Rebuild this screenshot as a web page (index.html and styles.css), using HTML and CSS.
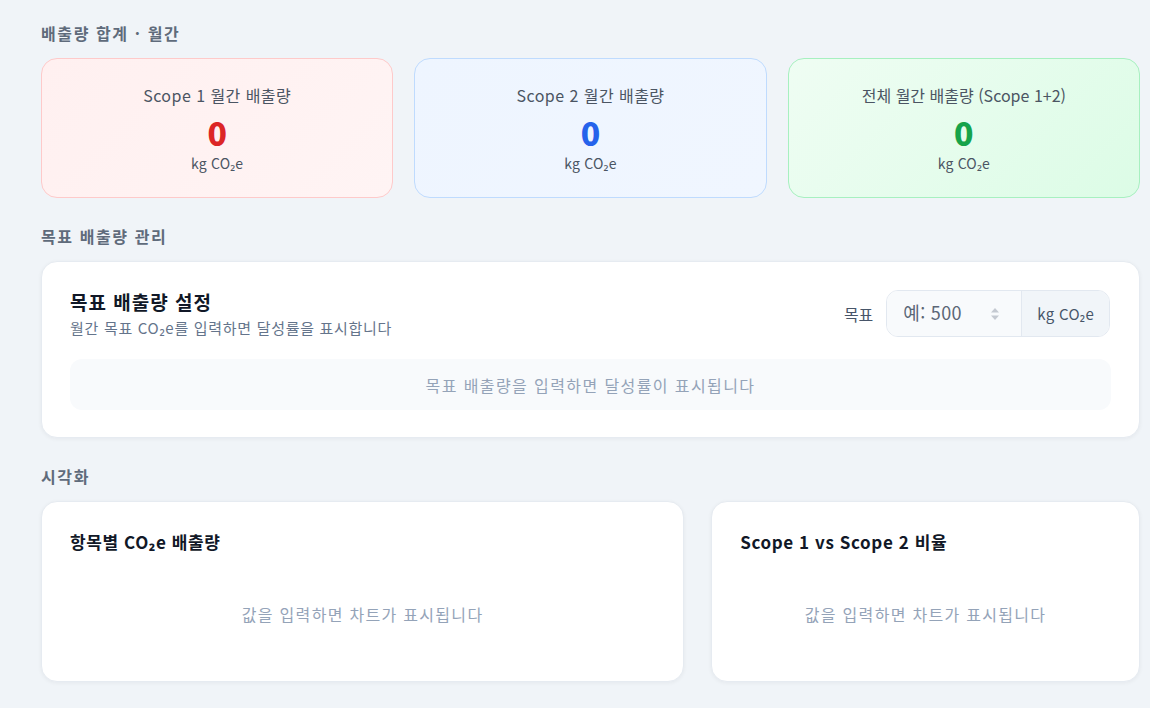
FILE: index.html
```html
<!DOCTYPE html>
<html lang="ko">
  <head>
    <meta charset="UTF-8" />
    <meta name="viewport" content="width=device-width, initial-scale=1.0" />
    <title>배출량 대시보드</title>
    <link rel="stylesheet" href="styles.css">
  </head>
  <body>
    <div class="page">
      <section class="section">
        <h2 class="section-title">배출량 합계 · 월간</h2>
        <div class="summary-grid">
          <div class="summary-card scope1">
            <div class="summary-label">Scope 1 월간 배출량</div>
            <div class="summary-value">0</div>
            <div class="summary-unit">kg CO₂e</div>
          </div>
          <div class="summary-card scope2">
            <div class="summary-label">Scope 2 월간 배출량</div>
            <div class="summary-value">0</div>
            <div class="summary-unit">kg CO₂e</div>
          </div>
          <div class="summary-card total">
            <div class="summary-label total-label">전체 월간 배출량 (Scope 1+2)</div>
            <div class="summary-value">0</div>
            <div class="summary-unit">kg CO₂e</div>
          </div>
        </div>
      </section>

      <section class="section">
        <h2 class="section-title">목표 배출량 관리</h2>
        <div class="panel goal-panel">
          <div class="goal-head">
            <div>
              <h3 class="goal-title">목표 배출량 설정</h3>
              <p class="goal-desc">월간 목표 CO₂e를 입력하면 달성률을 표시합니다</p>
            </div>
            <label class="goal-field">
              <span class="goal-label">목표</span>
              <span class="input-group">
                <span class="input-wrap">
                  <input type="text" class="goal-input" placeholder="예: 500" />
                  <svg class="spin" width="10" height="16" viewBox="0 0 10 16">
                    <path d="M1 6.5 L5 2 L9 6.5 Z" fill="#c4c9d1" />
                    <path d="M1 9.5 L5 14 L9 9.5 Z" fill="#c4c9d1" />
                  </svg>
                </span>
                <span class="input-addon">kg CO₂e</span>
              </span>
            </label>
          </div>
          <div class="goal-empty">목표 배출량을 입력하면 달성률이 표시됩니다</div>
        </div>
      </section>

      <section class="section">
        <h2 class="section-title">시각화</h2>
        <div class="chart-grid">
          <div class="panel chart-card">
            <h3 class="chart-title">항목별 CO₂e 배출량</h3>
            <div class="chart-empty">값을 입력하면 차트가 표시됩니다</div>
          </div>
          <div class="panel chart-card">
            <h3 class="chart-title">Scope 1 vs Scope 2 비율</h3>
            <div class="chart-empty">값을 입력하면 차트가 표시됩니다</div>
          </div>
        </div>
      </section>
    </div>
  </body>
</html>
```

FILE: styles.css
```css
body {
  margin: 0;
  background-color: #f0f4f8;
  font-family: "Noto Sans CJK KR", "Noto Sans", sans-serif;
  color: #111827;
}

.page {
  width: 1099px;
  padding: 23px 0 0 41px;
}

.section {
  margin-bottom: 28px;
}

.section-title {
  margin: 0 0 15px;
  font-size: 16px;
  line-height: 20px;
  font-weight: 700;
  letter-spacing: 1.6px;
  color: #5f6b7b;
}

/* summary cards */
.summary-grid {
  display: grid;
  grid-template-columns: repeat(3, 1fr);
  gap: 21px;
}

.summary-card {
  height: 140px;
  box-sizing: border-box;
  border-radius: 16px;
  border: 1px solid #e5e7eb;
  display: flex;
  flex-direction: column;
  align-items: center;
  padding-top: 26px;
}

.summary-card.scope1 {
  background: linear-gradient(135deg, #fff0f0, #fff4f4);
  border-color: #fecaca;
}

.summary-card.scope2 {
  background: linear-gradient(135deg, #eef5ff, #f0f6ff);
  border-color: #bfdbfe;
}

.summary-card.total {
  background: linear-gradient(135deg, #effdf3, #dcfce6);
  border-color: #a7f0c0;
}

.summary-label {
  font-size: 16px;
  line-height: 20px;
  letter-spacing: 0.45px;
  color: #4b5563;
}

.total-label {
  letter-spacing: 0;
}

.summary-value {
  margin-top: 8px;
  font-size: 32px;
  line-height: 38px;
  font-weight: 800;
}

.scope1 .summary-value {
  color: #dc2626;
}

.scope2 .summary-value {
  color: #2563eb;
}

.total .summary-value {
  color: #16a34a;
}

.summary-unit {
  margin-top: 3px;
  font-size: 14px;
  line-height: 18px;
  letter-spacing: 0.2px;
  color: #4b5563;
}

/* white panels */
.panel {
  background-color: #ffffff;
  border: 1px solid #e6ebf1;
  border-radius: 16px;
  box-shadow: 0 1px 4px rgba(15, 23, 42, 0.05);
  box-sizing: border-box;
}

.goal-panel {
  padding: 27px 28px 27px 28px;
}

.goal-head {
  display: flex;
  justify-content: space-between;
  align-items: center;
}

.goal-title {
  margin: 0 0 3px;
  font-size: 19px;
  line-height: 26px;
  font-weight: 700;
  letter-spacing: 1px;
  color: #111827;
}

.goal-desc {
  margin: 0;
  font-size: 15px;
  line-height: 20px;
  letter-spacing: 0.7px;
  color: #64748b;
}

.goal-field {
  display: flex;
  align-items: center;
  gap: 13px;
  margin-right: 1px;
}

.goal-label {
  font-size: 16px;
  color: #475569;
}

.input-group {
  display: flex;
  height: 47px;
  box-sizing: border-box;
  border: 1px solid #e2e8f0;
  border-radius: 12px;
  overflow: hidden;
}

.input-wrap {
  display: flex;
  align-items: center;
  width: 135px;
  padding: 0 21px 0 16px;
  box-sizing: border-box;
  background-color: #f8fafc;
  border-right: 1px solid #e2e8f0;
}

.goal-input {
  flex: 1;
  min-width: 0;
  border: none;
  outline: none;
  background: transparent;
  font-family: inherit;
  font-size: 18px;
  letter-spacing: 0.3px;
  color: #111827;
  padding: 0 0 4px;
}

.goal-input::placeholder {
  color: #5b6676;
}

.input-addon {
  display: flex;
  align-items: center;
  padding: 0 15px;
  background-color: #f1f5f9;
  font-size: 15px;
  letter-spacing: 0.3px;
  color: #475569;
}

.goal-empty {
  margin-top: 21px;
  height: 51px;
  border-radius: 12px;
  background-color: #f8fafc;
  display: flex;
  align-items: center;
  justify-content: center;
  font-size: 16px;
  letter-spacing: 1.4px;
  color: #94a3b8;
}

/* charts */
.chart-grid {
  display: grid;
  grid-template-columns: 3fr 2fr;
  gap: 27px;
}

.chart-card {
  padding: 28px 28px 0;
}

.chart-title {
  margin: 0;
  font-size: 17px;
  line-height: 24px;
  font-weight: 700;
  letter-spacing: 0.6px;
  color: #111827;
}

.chart-empty {
  padding: 49px 0 56px;
  line-height: 22px;
  text-align: center;
  font-size: 16px;
  letter-spacing: 1.3px;
  color: #94a3b8;
}
```
